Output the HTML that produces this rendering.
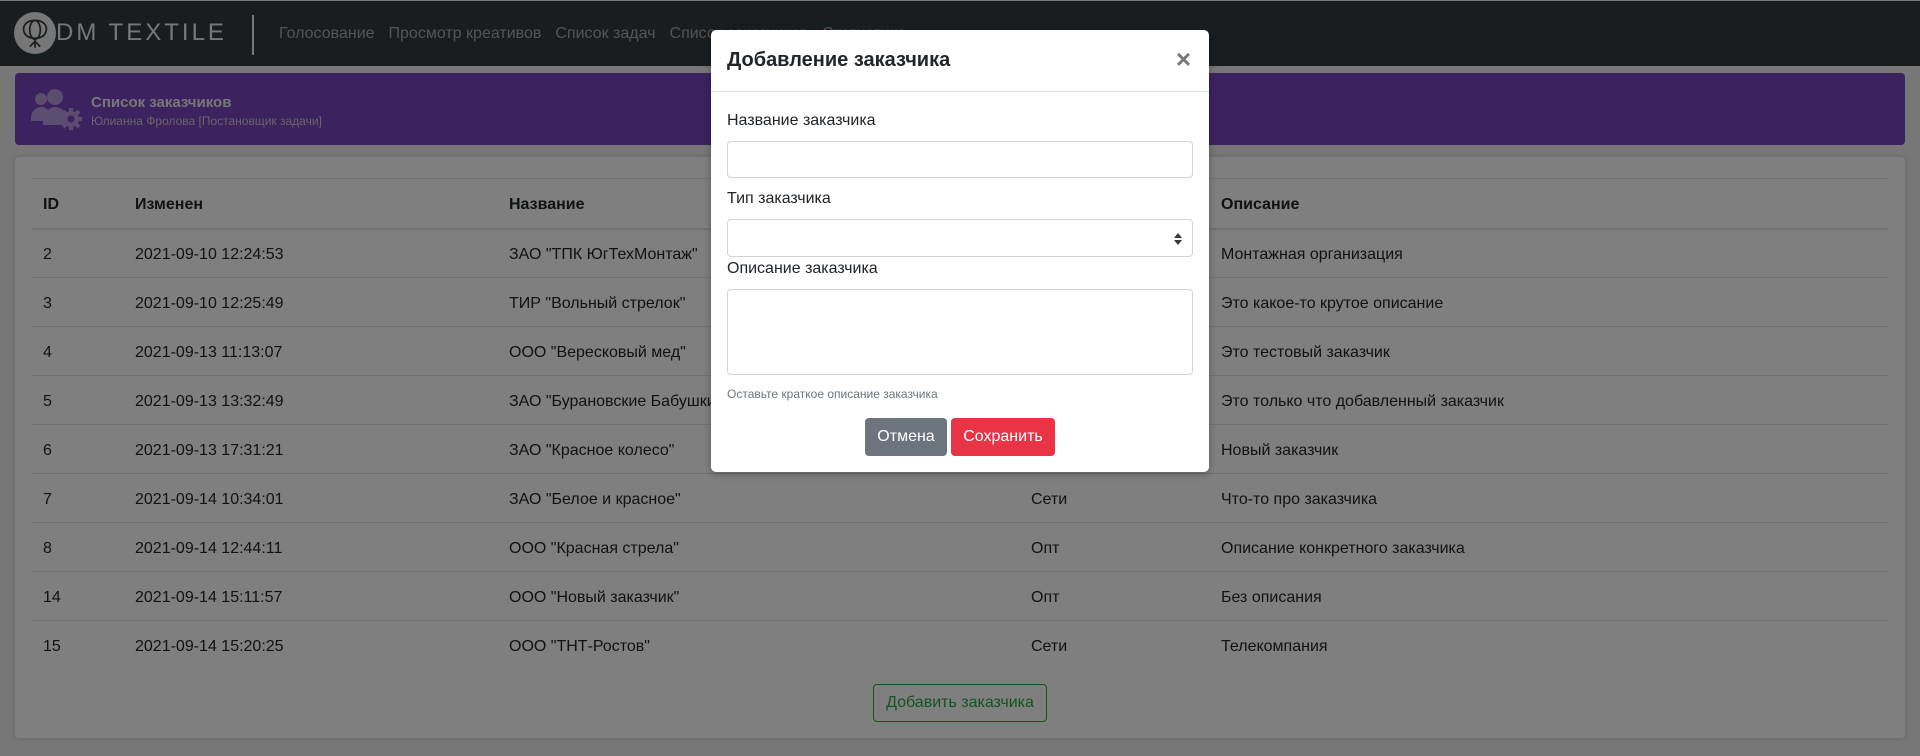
<!DOCTYPE html>
<html><head><meta charset="utf-8"><style>
*{box-sizing:border-box;margin:0;padding:0}
body{width:1920px;height:756px;overflow:hidden;background:#eeeeee;font-family:"Liberation Sans","Noto Sans CJK SC",sans-serif;color:#212529;position:relative}
.nav{position:absolute;left:0;top:1px;width:1920px;height:65px;background:#343a40}
.nav .brand{position:absolute;left:56px;top:18px;font-size:24px;letter-spacing:3px;color:#eee}
.nav .sep{position:absolute;left:252px;top:14px;width:2px;height:40px;background:#eee}
.nav .links{position:absolute;left:279px;top:24px;font-size:16px;color:#a8a8a8;white-space:nowrap}
.nav .links span{margin-right:14px}
.purple{position:absolute;left:15px;top:73px;width:1890px;height:72px;background:#7a44c0;border-radius:4px}
.purple .t{position:absolute;left:76px;top:21px;font-weight:bold;font-size:15px;color:#eee}
.purple .s{position:absolute;left:76px;top:41px;font-size:12px;color:#ccc}
.card{position:absolute;left:15px;top:157px;width:1890px;height:581px;background:#fff;border-radius:4px;box-shadow:0 0 4px rgba(0,0,0,.15)}
table{position:absolute;left:17px;top:21px;width:1856px;border-collapse:collapse;font-size:16px}
td,th{text-align:left;padding:3px 0 0 11px;height:49px;border-top:1px solid #dee2e6;font-weight:normal}
th{font-weight:bold;height:50px;border-bottom:2px solid #dee2e6}
.addbtn{position:absolute;left:858px;top:527px;width:174px;height:38px;border:1px solid #28a745;border-radius:4px;color:#28a745;font-size:16px;line-height:36px;text-align:center}
.ov{position:absolute;left:0;top:0;width:1920px;height:756px;background:rgba(0,0,0,.5)}
.modal{position:absolute;left:711px;top:30px;width:498px;height:442px;background:#fff;border-radius:5px;box-shadow:0 2px 8px rgba(0,0,0,.3)}
.mh{height:62px;border-bottom:1px solid #dee2e6;position:relative}
.mh .ti{position:absolute;left:16px;top:19px;font-size:20px;font-weight:600;color:#212529}
.mh .x{position:absolute;right:18px;top:14px;font-size:26px;color:#777;font-weight:bold}
.lbl{position:absolute;left:16px;font-size:16px;color:#212529}
.inp{position:absolute;left:16px;width:466px;border:1px solid #ced4da;border-radius:4px;background:#fff}
.help{position:absolute;left:16px;top:357px;font-size:12px;color:#6c757d}
.b{position:absolute;top:388px;height:38px;border-radius:4px;color:#fff;font-size:16px;line-height:38px;text-align:center}
</style></head><body>
<div class="nav">
<svg style="position:absolute;left:14px;top:11px" width="42" height="42" viewBox="0 0 40 40"><circle cx="20" cy="20" r="20" fill="#eee"/><g fill="none" stroke="#343a40" stroke-width="1.6"><ellipse cx="20" cy="17" rx="5" ry="9"/><path d="M20 8c-8 0-13 5-10 12 2 4 6 5 10 5M20 8c8 0 13 5 10 12-2 4-6 5-10 5M20 25v9M15 33l5-5 5 5"/></g></svg>
<div class="brand">DM TEXTILE</div><div class="sep"></div>
<div class="links"><span>Голосование</span><span>Просмотр креативов</span><span>Список задач</span><span>Список заказчиков</span><span>Статистика</span></div>
</div>
<div class="purple">
<svg style="position:absolute;left:16px;top:14px" width="52" height="44" viewBox="0 0 52 44"><g fill="#b59ae0"><circle cx="10" cy="12" r="6"/><circle cx="24" cy="10" r="8"/><path d="M0 32c0-8 5-12 10-12s9 3 9 8v6H0zM12 36c0-10 6-16 12-16s12 5 12 12v6H12z"/><circle cx="40" cy="32" r="8"/><g stroke="#b59ae0" stroke-width="4"><path d="M40 21v22M29 32h22M32 24l16 16M48 24L32 40"/></g></g><circle cx="40" cy="32" r="3.5" fill="#7a44c0"/></svg>
<div class="t">Список заказчиков</div><div class="s">Юлианна Фролова [Постановщик задачи]</div>
</div>
<div class="card">
<table>
<tr><th style="width:92px">ID</th><th style="width:374px">Изменен</th><th style="width:522px">Название</th><th style="width:190px"></th><th>Описание</th></tr>
<tr><td>2</td><td>2021-09-10 12:24:53</td><td>ЗАО "ТПК ЮгТехМонтаж"</td><td>Монтаж</td><td>Монтажная организация</td></tr>
<tr><td>3</td><td>2021-09-10 12:25:49</td><td>ТИР "Вольный стрелок"</td><td>Сети</td><td>Это какое-то крутое описание</td></tr>
<tr><td>4</td><td>2021-09-13 11:13:07</td><td>ООО "Вересковый мед"</td><td>Опт</td><td>Это тестовый заказчик</td></tr>
<tr><td>5</td><td>2021-09-13 13:32:49</td><td>ЗАО "Бурановские Бабушки"</td><td>Опт</td><td>Это только что добавленный заказчик</td></tr>
<tr><td>6</td><td>2021-09-13 17:31:21</td><td>ЗАО "Красное колесо"</td><td>Сети</td><td>Новый заказчик</td></tr>
<tr><td>7</td><td>2021-09-14 10:34:01</td><td>ЗАО "Белое и красное"</td><td>Сети</td><td>Что-то про заказчика</td></tr>
<tr><td>8</td><td>2021-09-14 12:44:11</td><td>ООО "Красная стрела"</td><td>Опт</td><td>Описание конкретного заказчика</td></tr>
<tr><td>14</td><td>2021-09-14 15:11:57</td><td>ООО "Новый заказчик"</td><td>Опт</td><td>Без описания</td></tr>
<tr><td>15</td><td>2021-09-14 15:20:25</td><td>ООО "ТНТ-Ростов"</td><td>Сети</td><td>Телекомпания</td></tr>
</table>
<div class="addbtn">Добавить заказчика</div>
</div>
<div class="ov"></div>
<div class="modal">
<div class="mh"><div class="ti">Добавление заказчика</div><div class="x">×</div></div>
<div class="lbl" style="top:82px">Название заказчика</div>
<div class="inp" style="top:111px;height:37px"></div>
<div class="lbl" style="top:160px">Тип заказчика</div>
<div class="inp" style="top:189px;height:38px"><svg style="position:absolute;right:10px;top:13px" width="8" height="12" viewBox="0 0 8 12"><path d="M4 0L8 5H0zM4 12L0 7h8z" fill="#343a40"/></svg></div>
<div class="lbl" style="top:230px">Описание заказчика</div>
<div class="inp" style="top:259px;height:86px"></div>
<div class="help">Оставьте краткое описание заказчика</div>
<div class="b" style="left:154px;width:82px;background:#6c757d">Отмена</div>
<div class="b" style="left:240px;width:104px;background:#e83445">Сохранить</div>
</div>
</body></html>
